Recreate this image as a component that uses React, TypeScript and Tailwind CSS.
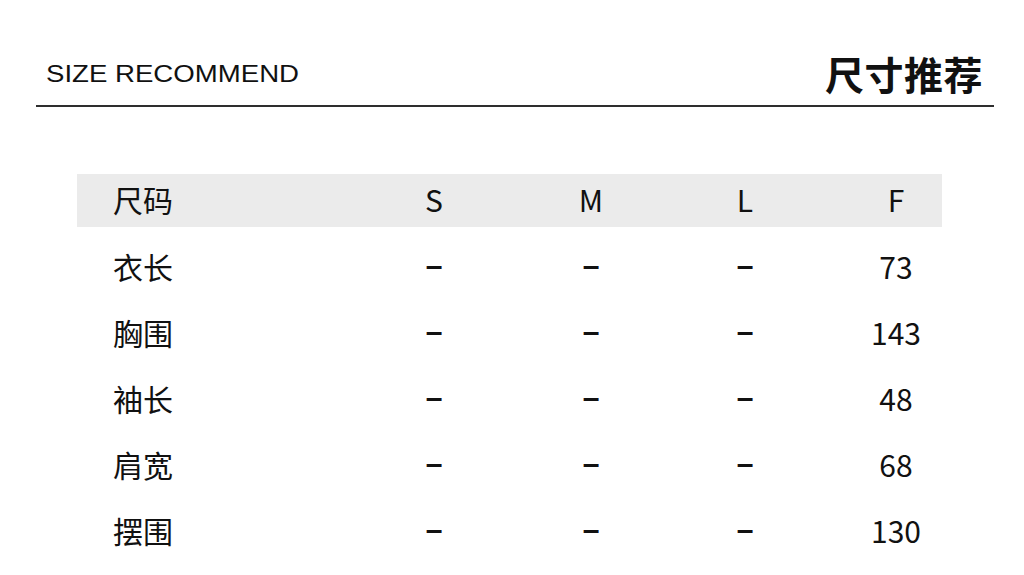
import React from "react";

const rows: [string, string][] = [
  ["衣长", "73"],
  ["胸围", "143"],
  ["袖长", "48"],
  ["肩宽", "68"],
  ["摆围", "130"],
];

const cjk = { fontFamily: '"Noto Sans CJK SC", "Noto Sans", sans-serif' };
const lib = { fontFamily: '"Liberation Sans", Arial, sans-serif' };

function Dash() {
  return (
    <div className="text-center font-bold" style={lib}>
      –
    </div>
  );
}

export default function App() {
  return (
    <div className="w-[1024px] h-[575px] bg-white text-[#111] overflow-hidden" style={cjk}>
      <div className="ml-[36px] mr-[30px] h-[107px] border-b-2 border-[#2e2e2e] flex items-end justify-between">
        <span
          className="ml-[10px] mb-[19px] inline-block origin-left scale-x-[1.2] text-[23px] leading-[23px] text-[#111]"
          style={lib}
        >
          SIZE RECOMMEND
        </span>
        <span className="mr-[11px] mb-[12px] text-[39px] leading-[39px] font-bold text-[#111] tracking-[0.5px]">尺寸推荐</span>
      </div>

      <div className="ml-[77px] w-[865px] mt-[67px] text-[30px] leading-none">
        <div className="grid grid-cols-[280px_154px_160px_148px_123px] h-[53px] pb-[4px] bg-[#ebebeb] items-center">
          <div className="pl-[36px]">尺码</div>
          <div className="text-center">S</div>
          <div className="text-center">M</div>
          <div className="text-center">L</div>
          <div className="text-center pl-[31px]">F</div>
        </div>
        <div className="mt-[8px]">
          {rows.map(([label, val]) => (
            <div key={label} className="grid grid-cols-[280px_154px_160px_148px_123px] h-[66px] pb-[4px] items-center">
              <div className="pl-[36px]">{label}</div>
              <Dash />
              <Dash />
              <Dash />
              <div className="text-center pl-[31px]">{val}</div>
            </div>
          ))}
        </div>
      </div>
    </div>
  );
}
